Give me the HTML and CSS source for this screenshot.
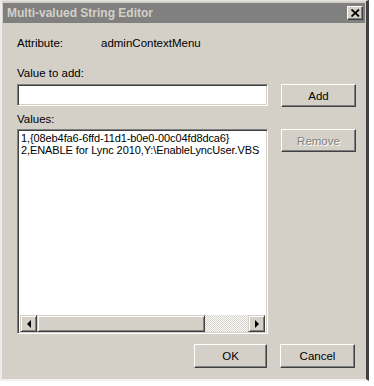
FILE: index.html
```html
<!DOCTYPE html>
<html>
<head>
<meta charset="utf-8">
<link rel="stylesheet" href="styles.css">
</head>
<body>
<div class="window">
  <div class="titlebar">
    <span class="title">Multi-valued String Editor</span>
    <span class="close"><svg width="9" height="8" viewBox="0 0 9 8"><path d="M0.5 0.5 L8 7.5 M8 0.5 L0.5 7.5" stroke="#000" stroke-width="1.8"/></svg></span>
  </div>
  <div class="content">
    <div class="attr"><span class="attr-label">Attribute:</span><span>adminContextMenu</span></div>
    <div class="label lbl-add">Value to add:</div>
    <div class="row row-add">
      <div class="input"></div>
      <div class="btn">Add</div>
    </div>
    <div class="label lbl-values">Values:</div>
    <div class="row row-list">
      <div class="listbox">
        <div class="items">
          <div>1,{08eb4fa6-6ffd-11d1-b0e0-00c04fd8dca6}</div>
          <div>2,ENABLE for Lync 2010,Y:\EnableLyncUser.VBS</div>
        </div>
        <div class="hscroll">
          <div class="sbtn"><span class="tri tri-left"></span></div>
          <div class="thumb"></div>
          <div class="track"></div>
          <div class="sbtn"><span class="tri tri-right"></span></div>
        </div>
      </div>
      <div class="btn disabled">Remove</div>
    </div>
    <div class="footer">
      <div class="btn">OK</div>
      <div class="btn">Cancel</div>
    </div>
  </div>
</div>
</body>
</html>
```
FILE: styles.css
```css
html, body {
  margin: 0;
  padding: 0;
  background: #ffffff;
}
body {
  font-family: "Liberation Sans", Arial, sans-serif;
  font-size: 11.5px;
  color: #000;
}
.window {
  box-sizing: border-box;
  width: 369px;
  height: 381px;
  background: #d4d0c8;
  border-top: 1px solid #e4e4e4;
  border-left: 2px solid #ececec;
  border-right: 3px solid #404040;
  border-bottom: 2px solid #f2f2f2;
  padding: 2px 1px 0 1px;
  display: flex;
  flex-direction: column;
}
.titlebar {
  height: 20px;
  background: #808080;
  display: flex;
  align-items: center;
  justify-content: space-between;
  padding: 0 2px 0 4px;
}
.title {
  color: #d4d0c8;
  font-weight: bold;
  font-size: 12px;
}
.close {
  box-sizing: border-box;
  width: 16px;
  height: 14px;
  background: #d4d0c8;
  border: 1px solid;
  border-color: #fff #404040 #404040 #fff;
  box-shadow: inset -1px -1px #808080;
  display: flex;
  align-items: center;
  justify-content: center;
}
.content {
  padding: 0 0 0 14px;
  display: flex;
  flex-direction: column;
}
.attr {
  margin-top: 13px;
  height: 14px;
  line-height: 14px;
  display: flex;
}
.attr-label {
  width: 84px;
}
.label {
  height: 14px;
  line-height: 14px;
}
.lbl-add { margin-top: 16px; }
.lbl-values { margin-top: 5px; }
.row {
  display: grid;
  grid-template-columns: 251px 75px;
  column-gap: 13px;
  align-items: start;
}
.row-add { margin-top: 4px; }
.row-list { margin-top: 3px; }
.input {
  box-sizing: border-box;
  height: 22px;
  background: #fff;
  border: 1px solid;
  border-color: #808080 #fff #fff #808080;
  box-shadow: inset 1px 1px #404040, inset -1px -1px #d4d0c8;
}
.btn {
  box-sizing: border-box;
  height: 23px;
  background: #d4d0c8;
  border: 1px solid;
  border-color: #fff #404040 #404040 #fff;
  box-shadow: inset -1px -1px #808080;
  display: flex;
  align-items: center;
  justify-content: center;
}
.btn.disabled {
  color: #808080;
  text-shadow: 1px 1px #fff;
}
.listbox {
  box-sizing: border-box;
  height: 205px;
  background: #fff;
  border: 1px solid;
  border-color: #808080 #fff #fff #808080;
  box-shadow: inset 1px 1px #404040, inset -1px -1px #d4d0c8;
  padding: 2px 2px 1px 2px;
  display: flex;
  flex-direction: column;
}
.items {
  flex: 1;
  font-size: 11px;
  line-height: 12px;
  letter-spacing: -0.1px;
  padding-left: 1px;
  white-space: nowrap;
}
.hscroll {
  height: 17px;
  display: flex;
}
.sbtn, .thumb {
  box-sizing: border-box;
  background: #d4d0c8;
  border: 1px solid;
  border-color: #d4d0c8 #404040 #404040 #d4d0c8;
  box-shadow: inset 1px 1px #fff, inset -1px -1px #808080;
}
.sbtn {
  width: 17px;
  display: flex;
  align-items: center;
  justify-content: center;
}
.thumb { width: 168px; }
.track {
  flex: 1;
  background: repeating-conic-gradient(#ffffff 0 25%, #d4d0c8 0 50%) 0 0 / 2px 2px;
}
.tri {
  width: 0;
  height: 0;
  border-top: 4px solid transparent;
  border-bottom: 4px solid transparent;
}
.tri-left { border-right: 4px solid #000; }
.tri-right { border-left: 4px solid #000; }
.footer {
  margin-top: 10px;
  display: flex;
  justify-content: flex-end;
  gap: 13px;
  padding-right: 10px;
}
.footer .btn {
  width: 73px;
  height: 24px;
}
.footer .btn + .btn { width: 75px; }
```
